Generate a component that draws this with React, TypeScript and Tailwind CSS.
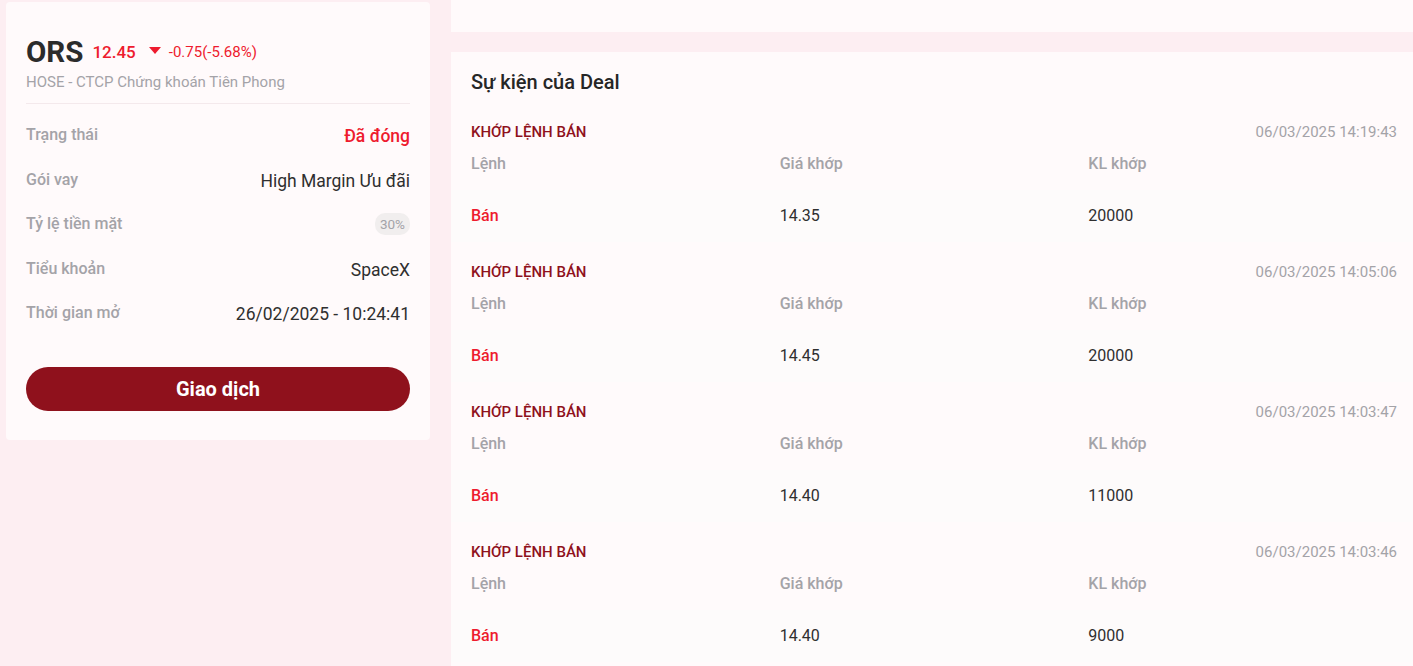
import React from "react";

const events = [
  { time: "06/03/2025 14:19:43", price: "14.35", qty: "20000" },
  { time: "06/03/2025 14:05:06", price: "14.45", qty: "20000" },
  { time: "06/03/2025 14:03:47", price: "14.40", qty: "11000" },
  { time: "06/03/2025 14:03:46", price: "14.40", qty: "9000" },
];

function Row({ label, children }: { label: string; children: React.ReactNode }) {
  return (
    <div className="flex h-[44.5px] items-start justify-between">
      <span className="text-[16px] font-medium leading-[20px] text-[#a4a3a8]">{label}</span>
      {children}
    </div>
  );
}

export default function App() {
  return (
    <div
      className="flex h-[666px] w-[1413px] overflow-hidden bg-[#fdeef2]"
      style={{ fontFamily: "Roboto, 'Noto Sans', sans-serif" }}
    >
      <div className="ml-[6px] w-[424px] shrink-0 pt-[2px]">
        <div className="rounded-[4px] bg-[#fffafb] px-5 pb-[29px] pt-[34px]">
          <div className="flex items-center">
            <span className="text-[29.5px] font-bold leading-[32px] text-[#2b2b2b]">ORS</span>
            <span className="ml-[9px] mt-[2px] text-[17px] font-medium text-[#ee1b2e]">12.45</span>
            <svg className="ml-[13px] mt-[-2px]" width="12" height="8" viewBox="0 0 12 8">
              <path d="M0 0 L12 0 L6 7 Z" fill="#ee1b2e" />
            </svg>
            <span className="ml-[8px] mt-[1px] text-[15px] text-[#ee1b2e]">-0.75(-5.68%)</span>
          </div>
          <div className="mt-[4px] text-[15px] leading-[20px] text-[#a4a3a8]">
            HOSE - CTCP Chứng khoán Tiên Phong
          </div>
          <div className="mt-[11px] h-px bg-[#f4e9ec]" />
          <div className="pt-[21px]">
            <Row label="Trạng thái">
              <span className="text-[17.5px] font-medium leading-[22px] text-[#ee1b2e]">Đã đóng</span>
            </Row>
            <Row label="Gói vay">
              <span className="text-[17.5px] leading-[22px] text-[#2f2f2f]">High Margin Ưu đãi</span>
            </Row>
            <Row label="Tỷ lệ tiền mặt">
              <span className="-mt-[1px] rounded-[10px] bg-[#f1eeee] px-[5px] py-[3px] text-[13.5px] leading-[16px] text-[#a4a3a8]">
                30%
              </span>
            </Row>
            <Row label="Tiểu khoản">
              <span className="text-[17.5px] leading-[22px] text-[#2f2f2f]">SpaceX</span>
            </Row>
            <Row label="Thời gian mở">
              <span className="text-[17.5px] leading-[22px] text-[#2f2f2f]">26/02/2025 - 10:24:41</span>
            </Row>
          </div>
          <button className="mt-[19px] flex h-[44px] w-full items-center justify-center rounded-full bg-[#8f111c] text-[20px] font-bold text-white">
            Giao dịch
          </button>
        </div>
      </div>

      <div className="ml-[21px] flex-1">
        <div className="h-[32px] bg-[#fffafb]" />
        <div className="mt-[20px] bg-[#fffafb]">
          <div className="px-5 pt-[18px] text-[20px] font-medium leading-[24px] text-[#262626]">
            Sự kiện của Deal
          </div>
          <div className="mt-[28px]">
            {events.map((e, i) => (
              <div key={i} className="pb-[20px]">
                <div className="flex h-[20px] items-center justify-between pl-5 pr-4">
                  <span className="text-[15px] font-medium text-[#8f111c]">KHỚP LỆNH BÁN</span>
                  <span className="text-[15px] text-[#a4a3a8]">{e.time}</span>
                </div>
                <div className="mt-[10px] grid h-[20px] grid-cols-3 items-center pl-5 pr-4 text-[16px] font-medium text-[#a4a3a8]">
                  <span>Lệnh</span>
                  <span>Giá khớp</span>
                  <span>KL khớp</span>
                </div>
                <div className="mt-[18px] grid h-[52px] grid-cols-3 items-center bg-[#fdfbfb] pl-5 pr-4 text-[16px]">
                  <span className="font-medium text-[#ee1b2e]">Bán</span>
                  <span className="text-[#2f2f2f]">{e.price}</span>
                  <span className="text-[#2f2f2f]">{e.qty}</span>
                </div>
              </div>
            ))}
          </div>
        </div>
      </div>
    </div>
  );
}
